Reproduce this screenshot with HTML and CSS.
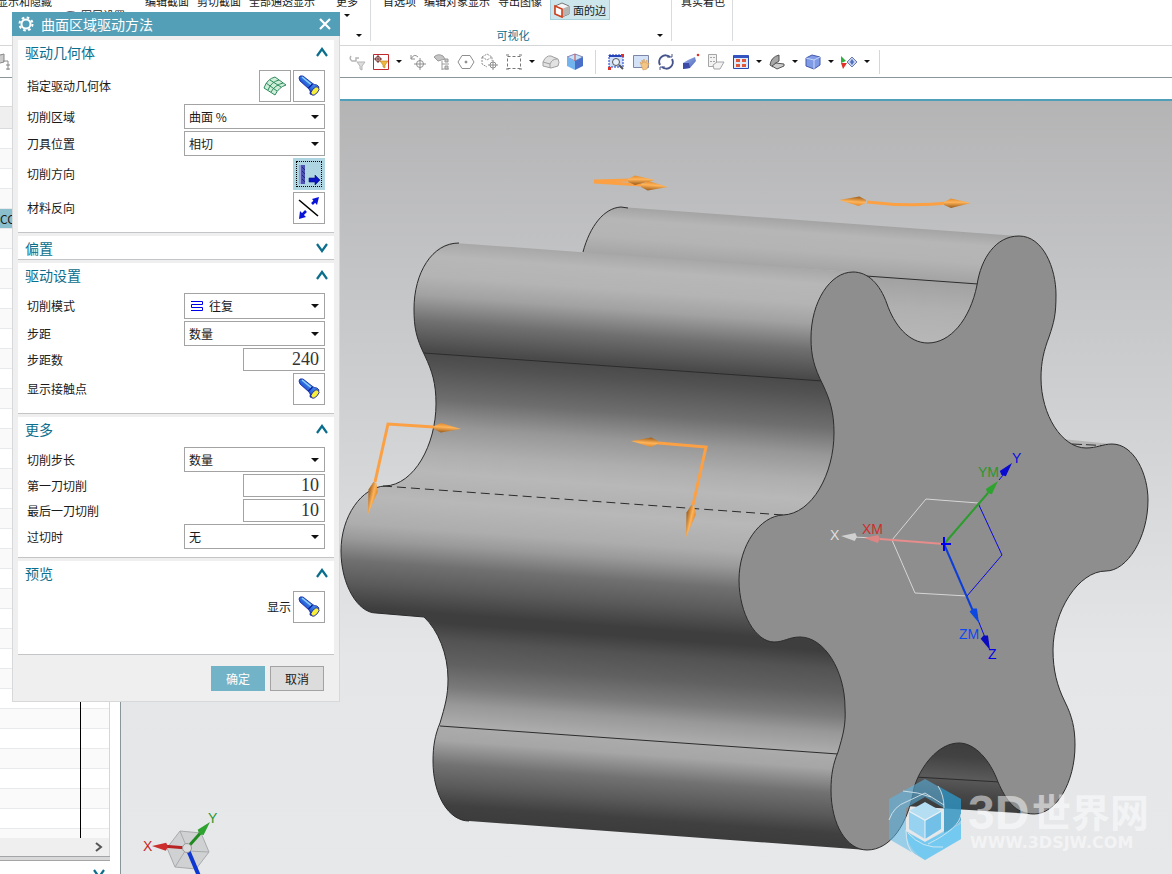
FILE: index.html
```
<!DOCTYPE html>
<html lang="zh-CN">
<head>
	<meta charset="utf-8">
	<title>曲面区域驱动方法</title>
	<link rel="stylesheet" href="styles.css">
</head>
<body>

<!-- shared icons -->
<svg class="defs" width="0" height="0">
	<defs>
		<linearGradient id="torchBody" x1="0" y1="1" x2="1" y2="0">
			<stop offset=".2" stop-color="#0a1fb0"/><stop offset=".5" stop-color="#2f6fe0"/><stop offset=".8" stop-color="#5aa6ee"/>
		</linearGradient>
		<symbol id="torch" viewBox="0 0 24 24">
			<path d="M2 4 Q2 1 6 2 L15 9 Q17 11 20 11 L22 13 Q21 18 16 21 L13 20 Q14 17 12 15 L3 7 Z" fill="url(#torchBody)" stroke="#10209c" stroke-width=".8"/>
			<path d="M5 3 L14 10.500" stroke="#8fd0f8" stroke-width="1.400"/>
			<path d="M11.500 14 L15.500 10" stroke="#0c1c9c" stroke-width="1.200"/>
			<ellipse cx="18" cy="17" rx="2.800" ry="5" transform="rotate(42 18 17)" fill="#f8ee3c" stroke="#10209c" stroke-width=".8"/>
		</symbol>
		<symbol id="chev" viewBox="0 0 12 10">
			<path d="M1 9 L6 2 L11 9" fill="none" stroke="#0b6e8c" stroke-width="2.2"/>
		</symbol>
		<linearGradient id="blueFace" x1="0" y1="0" x2="1" y2="1">
			<stop offset="0" stop-color="#9db4ee"/><stop offset="1" stop-color="#4b62b8"/>
		</linearGradient>
	</defs>
</svg>

<div class="app">
	<header class="ribbon">
		<div class="group group-view">
			<div class="labels"><span class="first">显示和隐藏</span><span>编辑截面</span><span>剪切截面</span><span>全部通透显示</span><span class="more">更多</span></div>
			<div class="layer">
				<svg width="16" height="12" viewBox="0 0 16 12"><path d="M1 6 Q6 0 15 4 L10 10 Z" fill="#dff0ea" stroke="#667"/></svg>
				<span>图层设置</span>
				<i class="caret"></i>
			</div>
			<div class="caption"><i class="caret"></i></div>
		</div>
		<div class="group group-visual">
			<div class="labels"><span>首选项</span><span>编辑对象显示</span><span>导出图像</span>
				<button class="edges" type="button">
					<svg width="16" height="16" viewBox="0 0 16 16">
						<path d="M1 4 L8 1 L15 4 V12 L8 15 L1 12 Z" fill="#f4f5f6" stroke="#777"/>
						<path d="M8 7 L15 4 V12 L8 15 Z" fill="#b4b4b4"/>
						<path d="M1 4 L8 7 V15 L1 12 Z" fill="#fff" stroke="#d5401c" stroke-width="1.6"/>
					</svg>面的边</button>
			</div>
			<div class="caption"><span>可视化</span><i class="caret"></i></div>
		</div>
		<div class="group group-real">
			<div class="labels"><span>真实着色</span></div>
		</div>
	</header>

	<div class="toolbar">
		<svg class="snap" width="11" height="18" viewBox="0 0 11 18" fill="#ccc" stroke="#888"><path d="M0 2 L4 1 V9 L0 10"/><path d="M3 8 H8 V17 M6 12 H10 M6 16 H10" fill="none"/></svg>
		<div class="tools">
			<svg viewBox="0 0 18 18" fill="none" stroke="#b5b5b5" stroke-width="1.5"><path d="M3 3 Q1 6 4 8 H8 V5 L11 5"/><path d="M9 9 H17 L14 13 V17 L12 16 V13 Z" fill="#ddd" stroke-width="1"/></svg>
			<svg viewBox="0 0 18 18"><path d="M1.500 1.500 H16.500 V16.500 H1.500 Z" fill="#fff" stroke="#c0282d"/><circle cx="6" cy="6" r="2.500" fill="none" stroke="#733"/><path d="M6 2 V10 M2 6 H10" stroke="#733"/><path d="M8 8 H16 L13 12 V15 L11 14 V12 Z" fill="#f0b83c" stroke="#b07c1c" stroke-width=".6"/></svg>
			<i class="caret"></i>
			<svg viewBox="0 0 18 18" fill="none" stroke="#8e8e8e"><path d="M2 6 Q5 0 9 4 M2 2 V6 H6"/><circle cx="11" cy="11" r="3.500"/><path d="M11 5 V17 M5 11 H17"/></svg>
			<svg viewBox="0 0 18 18" fill="#c5c5c5" stroke="#9b9b9b"><path d="M1 4 Q5 0 10 3 L12 6 L5 8 Z"/><path d="M9 8 V17 M9 11 H16 M9 16 H16" fill="none"/><path d="M12 6 H15 V9 H12Z M12 13 H15 V16 H12Z"/></svg>
			<svg viewBox="0 0 18 18" fill="none" stroke="#8e8e8e"><path d="M5 2.500 H13 L17 9 L13 15.500 H5 L1 9 Z"/><circle cx="9" cy="9" r="1" fill="#777"/></svg>
			<svg viewBox="0 0 18 18" fill="none" stroke="#8e8e8e"><path d="M1 4 L6 1 L11 4 V8 M1 4 V11 L6 14 M1 4 L6 7 L11 4" stroke-dasharray="2 1"/><circle cx="12" cy="12" r="3"/><path d="M12 7 V17 M7 12 H17"/></svg>
			<svg viewBox="0 0 18 18" fill="none" stroke="#777"><path d="M2.500 3.500 H15.500 V15.500 H2.500 Z" stroke-dasharray="3 2"/><path d="M1 2 H4 M14 2 H17 M1 16 H4 M14 16 H17"/></svg>
			<i class="caret"></i>
			<svg viewBox="0 0 18 18" fill="#e2e2e2" stroke="#a0a0a0"><path d="M1 9 Q4 2 9 3 L16 6 Q18 9 16 13 L9 15 L1 13 Z"/><path d="M1 9 L8 11 Q10 6 15 6 M8 11 V15" fill="none"/></svg>
			<svg viewBox="0 0 18 18"><path d="M1 4 L9 1 L17 4 L9 8 Z" fill="#c5e4fb" stroke="#88b"/><path d="M1 4 L9 8 V17 L1 13 Z" fill="#74b4ee"/><path d="M9 8 L17 4 V13 L9 17 Z" fill="#496fc8"/><path d="M9 1 V8" stroke="#d0453c"/></svg>
		</div>
		<div class="tools display">
			<svg viewBox="0 0 18 18"><path d="M2 2 H16 V14 H2 Z" fill="#cfe0fa" stroke="#1b37c0" stroke-dasharray="2 1"/><path d="M2 2 H16 V4 H2 Z" fill="#2443b8"/><circle cx="9" cy="9" r="3.500" fill="#e6f1fb" stroke="#555"/><path d="M12 12 L16 16" stroke="#555" stroke-width="2"/><path d="M14 1 H17 V4 H14 Z M1 14 H4 V17 H1Z" fill="#dc3228"/></svg>
			<svg viewBox="0 0 18 18"><path d="M1.500 2.500 H16.500 V14.500 H1.500 Z" fill="#d3e2f6" stroke="#7c87a8"/><path d="M8 9 L10 11 V7 L11 10 L12 6 L13 10 L15 7 L15 11 L17 10 L15 16 L11 17 Z" fill="#f4c583" stroke="#d39a55" stroke-width=".6"/></svg>
			<svg viewBox="0 0 18 18" fill="none" stroke="#46548c" stroke-width="2"><path d="M3 12 A6.500 6.500 0 0 1 13 4"/><path d="M15 6 A6.500 6.500 0 0 1 5 14"/><path d="M10 4 H15 V1 M8 14 H3 V17" stroke-width="1"/></svg>
			<svg viewBox="0 0 18 18"><path d="M1 10 L6 7 L13 4 L14 8 L8 15 L1 16 Z" fill="url(#blueFace)"/><path d="M1 10 L7 10 L8 15 L1 16 Z" fill="#3d4ba8"/><circle cx="16" cy="2" r="1.300" fill="#dc3228"/></svg>
			<svg viewBox="0 0 18 18" fill="#f3f3f3" stroke="#a5a5a5"><path d="M1.500 1.500 H9.500 V13.500 H1.500 Z"/><path d="M3 4.500 H5 M6 4.500 H8 M3 8.500 H5 M6 8.500 H8"/><path d="M6 12 L10 9 H17 L13 16 H7 Z"/></svg>
			<svg viewBox="0 0 18 18"><path d="M1.500 2.500 H16.500 V15.500 H1.500 Z" fill="#dfeafa" stroke="#2947b0"/><path d="M2 2 H16 V5 H2Z" fill="#3455c0"/><path d="M4 6 H8 V9 H4Z M10 6 H14 V9 H10Z M4 11 H8 V14 H4Z M10 11 H14 V14 H10Z" fill="#e0583a"/></svg>
			<i class="caret"></i>
			<svg viewBox="0 0 18 18" fill="#a6a6a6" stroke="#555"><path d="M2 12 Q3 4 11 2 V8 Q6 10 5 14 Z"/><path d="M4 13 L8 10 L16 11 V13 L9 16 Z" fill="#ccc"/></svg>
			<i class="caret"></i>
			<svg viewBox="0 0 18 18"><path d="M2 5 L8 2 L16 4 V12 L10 16 L2 13 Z" fill="#7f9be6" stroke="#4358a8"/><path d="M2 5 L10 7 L16 4 M10 7 V16" fill="none" stroke="#c9d6fa"/></svg>
			<i class="caret"></i>
			<svg viewBox="0 0 18 18"><path d="M1 3 L6 8 L1 10 Z" fill="#2fae3c"/><path d="M1 10 L7 10 L3 16 Z" fill="#e03228"/><path d="M7 9 L12 4 L17 9 L12 14 Z" fill="#c6d2ec" stroke="#6a7cb0"/><path d="M10 9 L12 6 L14 9 L12 12Z" fill="#5270c0"/></svg>
			<i class="caret"></i>
		</div>
	</div>

	<main class="work">
		<aside class="navigator">
			<div class="tree-head"></div>
			<div class="tree"><div class="picked">CC</div><div class="divider"></div></div>
			<div class="hscroll"><svg width="8" height="10" viewBox="0 0 8 10"><path d="M1 1 L6 5 L1 9" fill="none" stroke="#555" stroke-width="2"/></svg></div>
			<div class="splitter"></div>
			<div class="next"><svg class="down" width="12" height="10"><use href="#chev"/></svg></div>
		</aside>

		<section class="viewport">
			<svg class="scene" viewBox="121 101 1051 773" preserveAspectRatio="xMinYMin slice">
				<defs>
					<!-- shading runs across the extrusion direction -->
					<linearGradient id="flank" gradientUnits="userSpaceOnUse" x1="455" y1="243" x2="413" y2="817">
						<stop offset="0" stop-color="#a8a8a8"/>
						<stop offset=".025" stop-color="#b7b7b7"/>
						<stop offset=".06" stop-color="#b4b4b4"/>
						<stop offset=".094" stop-color="#a2a2a2"/>
						<stop offset=".139" stop-color="#707070"/>
						<stop offset=".19" stop-color="#494949"/>
						<stop offset=".215" stop-color="#525252"/>
						<stop offset=".273" stop-color="#6e6e6e"/>
						<stop offset=".32" stop-color="#979797"/>
						<stop offset=".365" stop-color="#aeaeae"/>
						<stop offset=".4" stop-color="#b8b8b8"/>
						<stop offset=".428" stop-color="#b3b3b3"/>
						<stop offset=".45" stop-color="#b8b8b8"/>
						<stop offset=".499" stop-color="#adadad"/>
						<stop offset=".525" stop-color="#9a9a9a"/>
						<stop offset=".563" stop-color="#707070"/>
						<stop offset=".603" stop-color="#5a5a5a"/>
						<stop offset=".644" stop-color="#3e3e3e"/>
						<stop offset=".66" stop-color="#3e3e3e"/>
						<stop offset=".69" stop-color="#535353"/>
						<stop offset=".731" stop-color="#616161"/>
						<stop offset=".771" stop-color="#7a7a7a"/>
						<stop offset=".8" stop-color="#989898"/>
						<stop offset=".835" stop-color="#acacac"/>
						<stop offset=".863" stop-color="#a6a6a6"/>
						<stop offset=".905" stop-color="#727272"/>
						<stop offset=".944" stop-color="#595959"/>
						<stop offset=".975" stop-color="#404040"/>
						<stop offset="1" stop-color="#3c3c3c"/>
					</linearGradient>
					<linearGradient id="backLobe" gradientUnits="userSpaceOnUse" x1="621" y1="207" x2="611" y2="344">
						<stop offset="0" stop-color="#a4a4a4"/>
						<stop offset=".09" stop-color="#b6b6b6"/>
						<stop offset=".22" stop-color="#b4b4b4"/>
						<stop offset=".38" stop-color="#a2a2a2"/>
						<stop offset=".58" stop-color="#b0b0b0"/>
						<stop offset=".85" stop-color="#b8b8b8"/>
						<stop offset="1" stop-color="#b4b4b4"/>
					</linearGradient>
					<linearGradient id="underside" gradientUnits="userSpaceOnUse" x1="958" y1="743" x2="953" y2="812">
						<stop offset="0" stop-color="#3e3e3e"/>
						<stop offset=".2" stop-color="#424242"/>
						<stop offset=".5" stop-color="#5a5a5a"/>
						<stop offset=".75" stop-color="#464646"/>
						<stop offset="1" stop-color="#3a3a3a"/>
					</linearGradient>
					<linearGradient id="cone" x1="0" y1="0" x2="0" y2="1">
						<stop offset="0" stop-color="#e08a2e"/><stop offset=".4" stop-color="#ffb45a"/><stop offset="1" stop-color="#9a5a18"/>
					</linearGradient>
					<path id="head" d="M0 0 L-20 -4.500 L-27 -1 L-27 2 L-20 5 Z" fill="url(#cone)"/>
					<path id="dart" d="M0 0 L-14 -4 L-16 0 L-14 4 Z"/>
				</defs>

				<!-- solid -->
				<path d="M621 207 L1019 236 L977 285 L960 345 H895 L853 272 L583 254 C590 226 604 208 621 207 Z" fill="url(#backLobe)"/>
				<path class="edge" d="M583 252 C590 226 604 208 621 207 L628 208"/>
				<path class="edge" d="M866 276 L978 284"/>
				<path d="M1062 439 L1112 444 L1108 452 L1080 450 Z" fill="#b6b6b6"/>
				<path class="edge" d="M1072 444 L1112 446" stroke-dasharray="10 4"/>
				<path d="M905 740 H1010 L1034 814 L905 806 Z" fill="url(#underside)"/>
				<path class="edge" d="M915 777 L1000 782"/>

				<path d="M455 243 C432 243 414 273 414 309 C414 327 416 338 425 356 C432 371 436 383 436 404 C436 445 414 485 385 486 C362 487 341 516 341 551 C341 585 358 613 376 613 L424 617 C438 630 448 654 448 679 C448 696 445 706 440 723 C435 735 433 746 433 761 C433 796 449 821 469 821 L867 850 L900 600 L853 272 Z" fill="url(#flank)"/>
				<path class="edge" d="M459 243 C432 243 414 273 414 309 C414 327 416 338 425 356 C432 371 436 383 436 404 C436 445 414 485 385 486 C362 487 341 516 341 551 C341 585 358 613 376 613 L424 617 C438 630 448 654 448 679 C448 696 445 706 440 723 C435 735 433 746 433 761 C433 796 449 821 469 821"/>
				<path class="edge" d="M424 353 L823 381"/>
				<path class="edge" d="M383 486 L783 515" stroke-dasharray="9 5"/>
				<path class="edge" d="M440 726 L838 754"/>

				<path class="edge face" d="M853 272 C868 272 880 284 887 304 C894 324 908 343 928 343 C950 343 970 320 977 285 C981 258 996 236 1019 236 C1043 236 1056 268 1056 295 C1056 315 1054 322 1049 337 C1044 350 1041 362 1041 378 C1041 415 1062 448 1086 448 C1097 448 1103 444 1112 444 C1134 444 1148 474 1148 500 C1148 538 1127 571 1106 571 C1078 571 1053 612 1053 650 C1053 670 1057 686 1065 702 C1072 716 1075 728 1075 745 C1075 783 1056 814 1034 814 C1015 814 1006 800 998 782 C990 760 975 743 959 743 C938 743 920 767 914 788 C908 825 890 850 867 850 C847 850 831 825 831 790 C831 775 833 764 838 752 C843 735 846 725 845 708 C845 670 824 637 800 637 C789 637 784 642 774 642 C756 642 739 614 739 580 C739 545 760 516 783 515 C812 514 834 474 834 433 C834 412 830 400 823 385 C814 367 811 356 811 338 C811 302 830 272 853 272 Z"/>

				<!-- cut direction arrows -->
				<g class="cut">
					<path d="M594 181 L632 180 M594 182 L642 185"/>
					<path d="M867 202 Q908 207 949 203"/>
					<path d="M434 427 L388 424 L375 482"/>
					<path d="M658 443 L706 447 L693 505"/>
				</g>
				<use href="#head" transform="translate(655 180)"/>
				<use href="#head" transform="translate(668 187) rotate(4)"/>
				<use href="#head" transform="translate(839 200) rotate(184)"/>
				<use href="#head" transform="translate(971 203)"/>
				<use href="#head" transform="translate(461 429) rotate(4)"/>
				<use href="#head" transform="translate(631 441) rotate(184)"/>
				<use href="#head" transform="translate(368 514) rotate(103) scale(1.2 1)"/>
				<use href="#head" transform="translate(686 537) rotate(103) scale(1.2 1)"/>

				<!-- machine and work coordinate systems -->
				<g class="csys" fill="none">
					<path d="M978 503 L926 499 L892 540 L915 593 L967 596" stroke="#d6d6d6"/>
					<path d="M978 503 L1002 555 L967 596" stroke="#0a0ae0"/>
					<path d="M944 544 L880 539" stroke="#e88c8c" stroke-width="2"/>
					<path d="M876 538 L852 537" stroke="#d6d6d6"/>
					<path d="M944 544 L988 493" stroke="#2c9c2c" stroke-width="2"/>
					<path d="M999 480 L1008 469 M978 620 L986 640" stroke="#0a0ae0"/>
					<path d="M944 544 L973 611" stroke="#0d3fd8" stroke-width="2"/>
					<path d="M944 537 V551 M941 544 H951" stroke="#0000f0" stroke-width="2"/>
				</g>
				<use href="#dart" transform="translate(841 536) rotate(184)" fill="#d0d0d0"/>
				<use href="#dart" transform="translate(864 538) rotate(184)" fill="#dc8585"/>
				<use href="#dart" transform="translate(998 481) rotate(-49)" fill="#2fa32f"/>
				<use href="#dart" transform="translate(1012 463) rotate(-49)" fill="#0a0ad0"/>
				<use href="#dart" transform="translate(979 623) rotate(66)" fill="#0d49e0"/>
				<use href="#dart" transform="translate(990 650) rotate(66)" fill="#0a0ac0"/>
				<g class="axis">
					<text x="830" y="540" fill="#dedede">X</text>
					<text x="862" y="534" fill="#d22c2c">XM</text>
					<text x="978" y="477" fill="#2c962c">YM</text>
					<text x="1012" y="463" fill="#0a0ae0">Y</text>
					<text x="959" y="639" fill="#0d49f0">ZM</text>
					<text x="988" y="659" fill="#0000e8">Z</text>
				</g>

				<!-- view triad -->
				<path d="M180 831 L201 833 L209 852 L196 869 L175 867 L167 848 Z M187 848 L180 831 M187 848 L201 833 M187 851 L209 852 M187 848 L175 867" fill="#d0d1d2" stroke="#a9aaab"/>
				<path d="M187 848 L162 846" stroke="#b82424" stroke-width="3"/>
				<use href="#dart" transform="translate(152 846) rotate(183)" fill="#cc2e2e"/>
				<path d="M188 847 L204 829" stroke="#1f8a1f" stroke-width="3"/>
				<use href="#dart" transform="translate(210 822) rotate(-48)" fill="#2fa32f"/>
				<path d="M188 850 L199 876" stroke="#0d37d0" stroke-width="4"/>
				<circle cx="187" cy="848" r="4.500" fill="#dcdcdc" stroke="#999"/>
				<g class="axis">
					<text x="143" y="851" fill="#c82828">X</text>
					<text x="208" y="823" fill="#2c962c">Y</text>
				</g>

				<!-- watermark -->
				<g>
					<path d="M925 779 L961 799 V839 L925 860 L889 839 V799 Z M925 797 L906 808 V831 L925 842 L944 831 V808 Z" fill="#5ab8e8" fill-opacity=".55" fill-rule="evenodd"/>
					<path d="M940 787 L961 799 V820 Q955 828 944 833 V808 Q945 797 940 787 Z" fill="#1f86b4" fill-opacity=".6"/>
					<path d="M906 832 L925 842 L961 824 V839 L925 860 Q908 850 906 832 Z" fill="#5cc6f5" fill-opacity=".6"/>
					<path d="M925 802 L941 811 L925 820 L909 811 Z" fill="#b5def2"/>
					<path d="M909 812 L925 821 V839 L909 829 Z" fill="#97d2f0"/>
					<path d="M941 812 L925 821 V839 L941 829 Z" fill="#72c0e8"/>
					<path d="M909 811 L925 820 L941 811 M925 820 V839" fill="none" stroke="#e6f2f8"/>
					<path d="M889 820 Q894 806 906 802 L925 793 L944 805 M903 791 Q918 792 931 797 M944 808 Q944 795 938 786 M906 830 Q906 848 914 854 M908 833 Q922 849 943 847 M961 814 Q960 828 928 844" fill="none" stroke="#e2ecf1" stroke-opacity=".8"/>
				</g>
				<g fill="#fff" fill-opacity=".5">
					<text class="mark" x="968" y="829">3D</text>
					<text class="mark-cn" x="1032" y="827">世界网</text>
					<text class="mark-url" x="970" y="848">WWW.3DSJW.COM</text>
				</g>
			</svg>
		</section>
	</main>
</div>

<form class="dialog">
	<div class="title">
		<svg width="16" height="16" viewBox="0 0 16 16"><circle cx="8" cy="8" r="4.500" fill="none" stroke="#fff" stroke-width="2"/><circle cx="8" cy="8" r="6.500" fill="none" stroke="#fff" stroke-width="2" stroke-dasharray="2.600 2.500"/></svg>
		<h1>曲面区域驱动方法</h1>
		<button class="close" type="button"><svg width="14" height="14" viewBox="0 0 14 14"><path d="M2 2 L12 12 M12 2 L2 12" stroke="#fff" stroke-width="2.200"/></svg></button>
	</div>

	<section class="panel">
		<h2>驱动几何体<svg class="up" width="12" height="10"><use href="#chev"/></svg></h2>
		<div class="rows">
			<div class="row"><span id="l1">指定驱动几何体</span>
				<button class="tool" type="button" aria-labelledby="l1"><svg width="24" height="24" viewBox="0 0 24 24"><path d="M1 14 Q4 5 12 3 L23 11 Q16 13 12 21 Z" fill="#cdeed9" stroke="#2f8a5c"/><path d="M5 16 Q8 8 16 6 M8 18 Q12 11 20 9 M3 9 L14 17 M7 6 L18 13" fill="none" stroke="#2f8a5c"/></svg></button>
				<button class="tool" type="button" aria-labelledby="l1"><svg width="24" height="24"><use href="#torch"/></svg></button>
			</div>
			<div class="row"><label for="area">切削区域</label><div class="pick"><select id="area"><option>曲面 %</option></select></div></div>
			<div class="row"><label for="pos">刀具位置</label><div class="pick"><select id="pos"><option>相切</option></select></div></div>
			<div class="row"><span id="l2">切削方向</span>
				<button class="tool on" type="button" aria-labelledby="l2"><svg width="24" height="24" viewBox="0 0 24 24"><path d="M2 3 H8 V22 H2 Z" fill="#4a52b4"/><path d="M3 3 V22" stroke="#9aa0e0" stroke-width="2"/><path d="M5 5 L8 8 M5 9 L8 12 M5 13 L8 16 M5 17 L8 20" stroke="#23287c"/><path d="M12 16 H18 V13 L23 18 L18 23 V20 H12 Z" fill="#0a14c4" stroke="#0a0f80" stroke-width=".6"/></svg></button>
			</div>
			<div class="row"><span id="l3">材料反向</span>
				<button class="tool" type="button" aria-labelledby="l3"><svg width="24" height="24" viewBox="0 0 24 24"><path d="M15 8 L19 4 M9 15 L5 19" stroke="#0a14d8" stroke-width="2.600"/><path d="M15 3 L22 1 L20 9 Z M3 15 L9 21 L2 23 Z" fill="#0a14d8"/><path d="M2 4 L21 20" stroke="#000" stroke-width="1.600"/></svg></button>
			</div>
		</div>
	</section>

	<section class="panel">
		<h2>偏置<svg class="down" width="12" height="10"><use href="#chev"/></svg></h2>
	</section>

	<section class="panel">
		<h2>驱动设置<svg class="up" width="12" height="10"><use href="#chev"/></svg></h2>
		<div class="rows">
			<div class="row"><label for="mode">切削模式</label><div class="pick with-icon">
				<svg width="13" height="12" viewBox="0 0 13 12"><path d="M0 1.500 H11.500 V4.500 H.5 V7.500 H11.500 V10.500 H0" fill="none" stroke="#0000e6" stroke-width="1"/></svg>
				<select id="mode"><option>往复</option></select></div></div>
			<div class="row"><label for="step">步距</label><div class="pick"><select id="step"><option>数量</option></select></div></div>
			<div class="row"><label for="count">步距数</label><input id="count" type="text" value="240"></div>
			<div class="row"><span id="l4">显示接触点</span>
				<button class="tool" type="button" aria-labelledby="l4"><svg width="24" height="24"><use href="#torch"/></svg></button>
			</div>
		</div>
	</section>

	<section class="panel">
		<h2>更多<svg class="up" width="12" height="10"><use href="#chev"/></svg></h2>
		<div class="rows">
			<div class="row"><label for="length">切削步长</label><div class="pick"><select id="length"><option>数量</option></select></div></div>
			<div class="row"><label for="firstcut">第一刀切削</label><input id="firstcut" type="text" value="10"></div>
			<div class="row"><label for="lastcut">最后一刀切削</label><input id="lastcut" type="text" value="10"></div>
			<div class="row"><label for="gouge">过切时</label><div class="pick"><select id="gouge"><option>无</option></select></div></div>
		</div>
	</section>

	<section class="panel preview">
		<h2>预览<svg class="up" width="12" height="10"><use href="#chev"/></svg></h2>
		<div class="rows">
			<div class="row end"><span id="l5">显示</span>
				<button class="tool" type="button" aria-labelledby="l5"><svg width="24" height="24"><use href="#torch"/></svg></button>
			</div>
		</div>
	</section>

	<div class="actions">
		<button class="ok" type="submit">确定</button>
		<button class="cancel" type="button">取消</button>
	</div>
</form>

</body>
</html>
```
FILE: styles.css
```
* { box-sizing: border-box; }

body {
	margin: 0;
	background: #fff;
	color: #1a1a1a;
	font: 12px/16px "Noto Sans CJK SC", sans-serif;
	overflow: hidden;
}
button, select, input { font: inherit; color: inherit; margin: 0; padding: 0; border-radius: 0; }
svg { display: block; flex: none; }
.defs { position: absolute; }

.app { display: flex; flex-direction: column; height: 100vh; }

.caret {
	flex: none;
	width: 0;
	height: 0;
	border: 3px solid transparent;
	border-top: 3px solid #111;
	border-bottom: 0;
}
.down { transform: rotate(180deg); }

/* ribbon */
.ribbon {
	flex: none;
	display: flex;
	height: 46px;
	overflow: hidden;
	border-bottom: 1px solid #d4d6d7;
	font-size: 11px;
}
.group {
	display: flex;
	flex-direction: column;
	height: 41px;
	border-right: 1px solid #d9dbdc;
}
.group-view { width: 371px; }
.group-visual { width: 301px; padding-left: 12px; }
.group-real { width: 61px; padding-left: 9px; }
.labels { display: flex; gap: 8px; height: 9px; margin-top: -7px; white-space: nowrap; }
.labels .first { width: 140px; margin-left: -3px; }
.labels .more { margin-left: 13px; }
.layer { display: flex; align-items: center; gap: 3px; height: 24px; padding: 2px 20px 0 62px; }
.layer .caret { margin-left: auto; }
.edges {
	display: flex;
	align-items: center;
	gap: 3px;
	height: 27px;
	padding: 6px 3px 0;
	border: 1px solid #a9cfda;
	background: #cde6ec;
	white-space: nowrap;
}
.caption {
	display: flex;
	justify-content: flex-end;
	align-items: center;
	margin-top: auto;
	height: 12px;
	padding-right: 8px;
	color: #0b6e8c;
}
.caption span { margin: 0 auto; padding-right: 14px; }

/* selection bar */
.toolbar {
	flex: none;
	display: flex;
	align-items: center;
	height: 32px;
	border-bottom: 1px solid #8a9599;
}
.toolbar .snap { margin-right: 334px; }
.tools { display: flex; align-items: center; }
.tools svg { width: 18px; height: 18px; margin: 0 3px; }
.tools .caret { margin: 0 4px 0 3px; }
.display { margin-left: 8px; padding: 0 6px 0 8px; border-left: 1px solid #d4d6d7; border-right: 1px solid #d4d6d7; height: 24px; }
.display svg { margin-right: 4px; }
.display .caret { margin: 0 3px 0 2px; }

/* navigator */
.work { flex: 1; display: flex; min-height: 0; }
.navigator {
	flex: none;
	display: flex;
	flex-direction: column;
	width: 121px;
	padding-top: 28px;
	border-right: 1px solid #8a9599;
}
.tree-head { height: 23px; margin-right: 10px; background: #efefef; border-top: 1px solid #d9dbdc; border-bottom: 1px solid #d9dbdc; }
.tree {
	flex: 1;
	display: flex;
	flex-direction: column;
	margin-right: 10px;
	padding-top: 80px;
	border-right: 1px solid #d4d6d7;
	background: repeating-linear-gradient(#fff 0 19px, #e9eaeb 19px 20px, #fafafa 20px 39px, #e9eaeb 39px 40px);
}
.picked { height: 19px; line-height: 19px; background: #8bbfce; }
.divider { flex: 1; width: 81px; border-right: 1px solid #000; }
.hscroll { display: flex; align-items: center; justify-content: flex-end; height: 18px; margin-right: 10px; padding-right: 6px; background: #efefef; border-right: 1px solid #d4d6d7; }
.splitter { height: 5px; margin-right: 10px; background: #d9d9d9; border: 1px solid #a3a5a6; border-width: 1px 0; }
.next { height: 13px; padding: 8px 0 0 93px; overflow: hidden; }

/* graphics window */
.viewport {
	flex: 1;
	min-width: 0;
	margin-top: 21px;
	border-top: 2px solid #4f9fb8;
	background: linear-gradient(#b4b4b5, #c5c6c8 25%, #d8d9db 52%, #e4e6e8 72%, #e7e8ea);
}
.scene { width: 100%; height: 100%; }
.edge { fill: none; stroke: #2c2c2c; stroke-width: 1; }
.edge.face { fill: #8e8e8e; }
.cut { fill: none; stroke: #fca044; stroke-width: 3; }
.axis { font: 14px "Liberation Sans", sans-serif; }
.mark { font: bold 48px "Liberation Sans", sans-serif; }
.mark-cn { font: bold 39px "Noto Sans CJK SC", sans-serif; }
.mark-url { font: bold 16px "DejaVu Sans", sans-serif; }

/* dialog */
.dialog {
	position: absolute;
	left: 12px;
	top: 12px;
	width: 328px;
	padding-bottom: 10px;
	border: 1px solid #d6d8d9;
	border-top: 0;
	background: #efefef;
}
.title {
	display: flex;
	align-items: center;
	gap: 7px;
	height: 24px;
	margin: 0 -1px 4px;
	padding: 0 8px 0 6px;
	background: #549fb8;
	color: #fff;
}
.title h1 { flex: 1; margin: 0; font-size: 14px; font-weight: normal; line-height: 24px; }
.close { border: 0; background: none; }
.panel {
	margin: 0 5px 3px;
	border-bottom: 1px solid #c4c5c6;
	background: #fff;
}
.panel h2 {
	display: flex;
	justify-content: space-between;
	align-items: center;
	height: 23px;
	margin: 0;
	padding: 0 6px 0 7px;
	color: #0b6e8c;
	font-size: 14px;
	font-weight: normal;
}
.rows { display: flex; flex-direction: column; gap: 2px; padding: 7px 9px 8px; }
.row { display: flex; align-items: center; gap: 2px; }
.row > label, .row > span { flex: 1; }
.row.end > span { flex: none; margin-left: auto; }
.preview .rows { padding-bottom: 31px; }

.tool {
	display: flex;
	align-items: center;
	justify-content: center;
	width: 32px;
	height: 32px;
	border: 1px solid #a3a3a3;
	background: #fff;
}
.tool.on { border-color: #aed6e2; background: #aed6e2; outline: 1px dotted #000; outline-offset: -4px; }
.pick { position: relative; width: 141px; }
.pick::after {
	content: "";
	position: absolute;
	right: 6px;
	top: 11px;
	border: 4px solid transparent;
	border-top-color: #111;
	border-bottom: 0;
	pointer-events: none;
}
.pick select {
	display: block;
	width: 100%;
	height: 25px;
	padding: 0 16px 0 4px;
	border: 1px solid #a3a3a3;
	background: #fff;
	appearance: none;
}
.pick.with-icon select { height: 26px; padding-left: 24px; }
.with-icon svg { position: absolute; left: 7px; top: 7px; }
.row input {
	width: 82px;
	height: 23px;
	padding: 0 5px;
	border: 1px solid #a3a3a3;
	background: #fff;
	color: #333;
	font: 18px "Liberation Serif", serif;
	text-align: right;
}

.actions { display: flex; justify-content: flex-end; gap: 5px; padding: 8px 15px 0 0; }
.actions button { width: 54px; height: 25px; border: 1px solid #a3a3a3; background: #dcdcdc; }
.actions .ok { border-color: #72b3c8; background: #72b3c8; color: #fff; }
```
